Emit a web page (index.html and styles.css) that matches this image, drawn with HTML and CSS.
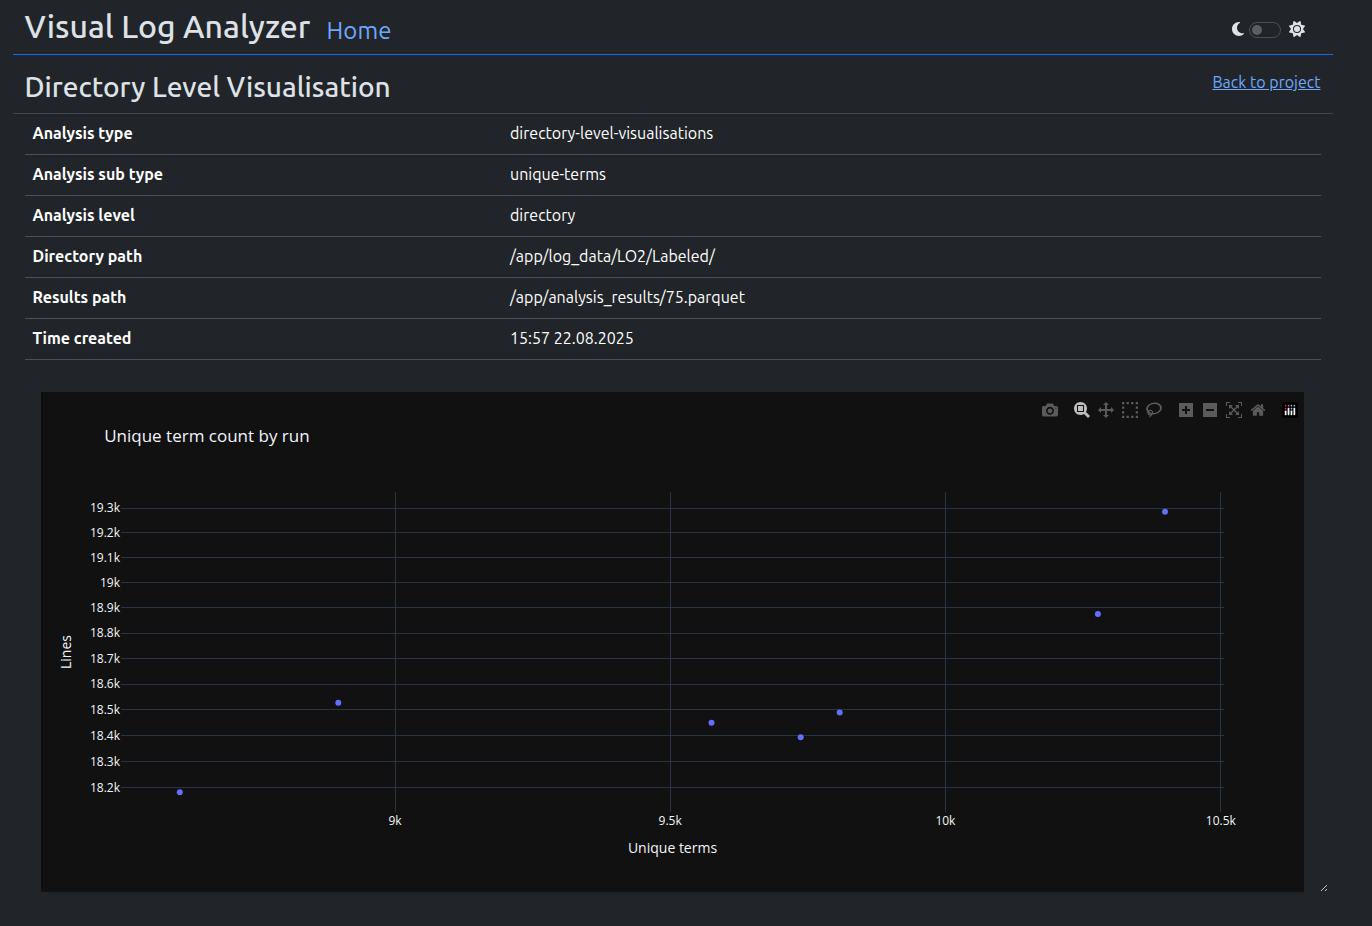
FILE: index.html
```html
<!DOCTYPE html>
<html lang="en">
<head>
<meta charset="utf-8">
<title>Visual Log Analyzer</title>
<link rel="stylesheet" href="styles.css">
</head>
<body>
<div class="container">
  <header class="topbar">
    <h1 class="brand">Visual Log Analyzer</h1>
    <a class="home-link">Home</a>
    <div class="theme">
      <svg class="moon" viewBox="0 0 384 512"><path d="M223.500 32C100 32 0 132.300 0 256S100 480 223.500 480c60.600 0 115.500-24.200 155.800-63.400c5-4.900 6.300-12.500 3.100-18.700s-10.100-9.700-17-8.500c-9.800 1.700-19.800 2.600-30.100 2.600c-96.900 0-175.500-78.800-175.500-176c0-65.800 36-123.100 89.300-153.300c6.100-3.500 9.200-10.500 7.700-17.300s-7.300-11.900-14.300-12.500c-6.300-.5-12.600-.8-19-.8z"/></svg>
      <span class="switch"><span class="knob"></span></span>
      <svg class="sun" viewBox="0 0 512 512"><path d="M361.500 1.200c5 2.100 8.600 6.600 9.600 11.900L391 121l107.900 19.800c5.300 1 9.800 4.600 11.900 9.600s1.500 10.700-1.600 15.200L446.900 256l62.300 90.300c3.100 4.500 3.700 10.200 1.600 15.200s-6.600 8.600-11.900 9.600L391 391 371.100 498.900c-1 5.300-4.600 9.800-9.600 11.900s-10.700 1.500-15.200-1.600L256 446.900l-90.300 62.300c-4.500 3.100-10.200 3.700-15.200 1.600s-8.600-6.600-9.600-11.900L121 391 13.100 371.100c-5.300-1-9.800-4.600-11.900-9.600s-1.500-10.700 1.600-15.200L65.100 256 2.800 165.700c-3.100-4.500-3.700-10.200-1.600-15.200s6.600-8.600 11.900-9.600L121 121 140.900 13.100c1-5.300 4.600-9.800 9.600-11.900s10.700-1.500 15.200 1.600L256 65.100 346.300 2.800c4.500-3.100 10.200-3.700 15.200-1.600zM160 256a96 96 0 1 1 192 0 96 96 0 1 1 -192 0zm224 0a128 128 0 1 0 -256 0 128 128 0 1 0 256 0z"/></svg>
    </div>
  </header>
  <div class="heading">
    <h2 class="title">Directory Level Visualisation</h2>
    <a class="back">Back to project</a>
  </div>
  <main class="content">
    <dl class="details">
      <div class="row"><dt>Analysis type</dt><dd>directory-level-visualisations</dd></div>
      <div class="row"><dt>Analysis sub type</dt><dd>unique-terms</dd></div>
      <div class="row"><dt>Analysis level</dt><dd>directory</dd></div>
      <div class="row"><dt>Directory path</dt><dd>/app/log_data/LO2/Labeled/</dd></div>
      <div class="row"><dt>Results path</dt><dd>/app/analysis_results/75.parquet</dd></div>
      <div class="row"><dt>Time created</dt><dd>15:57 22.08.2025</dd></div>
    </dl>
    <div class="chart-wrap">
      <div class="chart">
        <svg class="plot" viewBox="41 392 1263 500">
          <path class="grid" d="M395.5 492V812M670.5 492V812M945.5 492V812M1220.5 492V812M121 508.5H1224M121 532.5H1224M121 557.5H1224M121 582.5H1224M121 607.5H1224M121 633.5H1224M121 658.5H1224M121 684.5H1224M121 709.5H1224M121 735.5H1224M121 761.5H1224M121 787.5H1224"/>
          <g class="dots">
            <circle cx="179.8" cy="792.3" r="3"/><circle cx="338.3" cy="702.7" r="3"/><circle cx="711.5" cy="722.7" r="3"/><circle cx="800.7" cy="737.2" r="3"/><circle cx="839.7" cy="712.4" r="3"/><circle cx="1097.9" cy="614" r="3"/><circle cx="1165" cy="511.7" r="3"/>
          </g>
          <g class="ticks ticks-y">
            <text x="120" y="512">19.3k</text><text x="120" y="537">19.2k</text><text x="120" y="562">19.1k</text><text x="120" y="587">19k</text><text x="120" y="612">18.9k</text><text x="120" y="637">18.8k</text><text x="120" y="663">18.7k</text><text x="120" y="688">18.6k</text><text x="120" y="714">18.5k</text><text x="120" y="740">18.4k</text><text x="120" y="766">18.3k</text><text x="120" y="792">18.2k</text>
          </g>
          <g class="ticks ticks-x">
            <text x="395" y="825">9k</text><text x="670.2" y="825">9.5k</text><text x="945.4" y="825">10k</text><text x="1220.8" y="825">10.5k</text>
          </g>
          <text class="plot-title" x="104.2" y="442">Unique term count by run</text>
          <text class="axis" x="672.5" y="853">Unique terms</text>
          <text class="axis" transform="translate(71 652) rotate(-90)">Lines</text>
        </svg>
        <div class="modebar">
          <div class="group"><svg viewBox="0 0 1000 1000"><path transform="matrix(1 0 0 -1 0 850)" d="m500 450c-83 0-150-67-150-150 0-83 67-150 150-150 83 0 150 67 150 150 0 83-67 150-150 150z m400 150h-120c-16 0-34 13-39 29l-31 93c-6 15-23 28-40 28h-340c-16 0-34-13-39-28l-31-94c-6-15-23-28-40-28h-120c-55 0-100-45-100-100v-450c0-55 45-100 100-100h800c55 0 100 45 100 100v450c0 55-45 100-100 100z m-400-550c-138 0-250 112-250 250 0 138 112 250 250 250 138 0 250-112 250-250 0-138-112-250-250-250z m365 380c-19 0-35 16-35 35 0 19 16 35 35 35 19 0 35-16 35-35 0-19-16-35-35-35z"/></svg></div>
          <div class="group">
            <svg class="active" viewBox="0 0 1000 1000"><path transform="matrix(1 0 0 -1 0 850)" d="m1000-25l-250 251c40 63 63 138 63 218 0 224-182 406-407 406-224 0-406-182-406-406s183-406 407-406c80 0 155 22 218 62l250-250 125 125z m-812 250l0 438 437 0 0-438-437 0z m62 375l313 0 0-312-313 0 0 312z"/></svg>
            <svg viewBox="0 0 1000 1000"><path transform="matrix(1 0 0 -1 0 850)" d="m1000 350l-187 188 0-125-250 0 0 250 125 0-188 187-187-187 125 0 0-250-250 0 0 125-188-188 186-187 0 125 252 0 0-250-125 0 187-188 188 188-125 0 0 250 250 0 0-126 187 188z"/></svg>
            <svg viewBox="0 0 1000 1000"><path d="M0 0h143v143H0zM286 0h143v143H286zM571 0h143v143H571zM857 0h143v143H857zM0 286h143v143H0zM857 286h143v143H857zM0 571h143v143H0zM857 571h143v143H857zM0 857h143v143H0zM286 857h143v143H286zM571 857h143v143H571zM857 857h143v143H857z"/></svg>
            <svg viewBox="0 0 1031 1000"><path transform="matrix(1 0 0 -1 0 850)" d="m1018 538c-36 207-290 336-568 286-277-48-473-256-436-463 10-57 36-108 76-151-13-66 11-137 68-183 34-28 75-41 114-42l-55-70 0 0c-2-1-3-2-4-3-10-14-8-34 5-45 14-11 34-8 45 4 1 1 2 3 2 5l0 0 113 140c16 11 31 24 45 40 4 3 6 7 8 11 48-3 100 0 151 9 278 48 473 255 436 462z m-624-379c-80 14-149 48-197 96 42 42 109 47 156 9 33-26 47-66 41-105z m-187-74c-19 16-33 37-39 60 50-32 109-55 174-68-42-25-95-24-135 8z m360 75c-34-7-69-9-102-8 8 62-16 128-68 170-73 59-175 54-244-5-9 20-16 40-20 61-28 159 121 317 333 354s407-60 434-217c28-159-121-318-333-355z"/></svg>
          </div>
          <div class="group">
            <svg viewBox="0 0 875 1000"><path transform="matrix(1 0 0 -1 0 850)" d="m1 787l0-875 875 0 0 875-875 0z m687-500l-187 0 0-187-125 0 0 187-188 0 0 125 188 0 0 187 125 0 0-187 187 0 0-125z"/></svg>
            <svg viewBox="0 0 875 1000"><path transform="matrix(1 0 0 -1 0 850)" d="m0 788l0-876 876 0 0 876-876 0z m688-500l-500 0 0 125 500 0 0-125z"/></svg>
            <svg viewBox="0 0 1000 1000"><path transform="matrix(1 0 0 -1 0 850)" d="m250 850l-187 0-63 0 0-62 0-188 63 0 0 188 187 0 0 62z m688 0l-188 0 0-62 188 0 0-188 62 0 0 188 0 62-62 0z m-875-938l0 188-63 0 0-188 0-62 63 0 187 0 0 62-187 0z m875 188l0-188-188 0 0-62 188 0 62 0 0 62 0 188-62 0z m-125 188l-1 0-93-94-156 156 156 156 92-93 2 0 0 250-250 0 0-2 93-92-156-156-156 156 94 92 0 2-250 0 0-250 0 0 93 93 157-156-157-156-93 94 0 0 0-250 250 0 0 0-94 93 156 157 156-157-93-93 0 0 250 0 0 250z"/></svg>
            <svg viewBox="0 0 928.6 1000"><path transform="matrix(1 0 0 -1 0 850)" d="m786 296v-267q0-15-11-26t-25-10h-214v214h-143v-214h-214q-15 0-25 10t-11 26v267q0 1 0 2t0 2l321 264 321-264q1-1 1-4z m124 39l-34-41q-5-5-12-6h-2q-7 0-12 3l-386 322-386-322q-7-4-13-4-7 2-12 7l-35 41q-4 5-3 13t6 12l401 334q18 15 42 15t43-15l136-114v109q0 8 5 13t13 5h107q8 0 13-5t5-13v-227l122-102q5-5 6-12t-4-13z"/></svg>
          </div>
          <div class="group">
            <svg viewBox="0 0 132 132"><rect width="132" height="132" rx="18" fill="#000"/><g fill="#fff"><rect x="23" y="71" width="14" height="38" rx="6"/><rect x="47" y="47" width="14" height="62" rx="6"/><rect x="71" y="71" width="14" height="38" rx="6"/><rect x="95" y="47" width="14" height="62" rx="6"/></g><g fill="#ef1d64"><circle cx="30" cy="30" r="7"/><circle cx="30" cy="54" r="7"/></g><circle cx="54" cy="30" r="7" fill="#e763a5"/><g fill="#8fb6ea"><circle cx="78" cy="30" r="7"/><circle cx="78" cy="54" r="7"/><circle cx="102" cy="30" r="7"/></g></svg>
          </div>
        </div>
      </div>
      <svg class="grip" viewBox="0 0 8 8"><path d="M1 7L7 1M5 7L7 5"/></svg>
    </div>
  </main>
</div>
</body>
</html>
```

FILE: styles.css
```css
* { box-sizing: border-box; }
body { margin: 0; background: #212529; color: #dee2e6; font: 16px/24px Ubuntu, "Noto Sans", sans-serif; }
h1, h2, dl, dd { margin: 0; font-weight: 500; }
dd { font-weight: 400; }
.container { width: 1320px; margin-left: 12.5px; }
.topbar { display: flex; height: 55px; padding: 0 12px; border-bottom: 1px solid #0d6efd; }
.brand { width: 302px; font-size: 32px; line-height: 53px; white-space: nowrap; }
.home-link { font-size: 24px; line-height: 61px; color: #6ea8fe; letter-spacing: 0.1px; }
.theme { display: flex; align-items: center; margin: 6px 16px 0 auto; height: 46px; }
.theme svg { fill: #dee2e6; }
.moon { width: 12px; height: 16px; margin-right: 5px; }
.sun { width: 16px; height: 16px; margin-left: 7.5px; }
.switch { display: flex; align-items: center; width: 32px; height: 16px; margin-top: 2px; padding: 0 2px; border: 1px solid #495057; border-radius: 8px; }
.knob { width: 10px; height: 10px; border-radius: 50%; background: #5b5f63; }
.heading { display: flex; justify-content: space-between; height: 59px; padding: 0 12px; border-bottom: 1px solid #41464b; }
.title { font-size: 28px; line-height: 63px; white-space: nowrap; }
.back { color: #6ea8fe; text-decoration: underline; line-height: 54px; }
.content { padding: 0 12px; }
.row { display: flex; height: 41px; padding: 7px 8px 9px; border-bottom: 1px solid #4d5154; color: #fff; }
dt { width: 477.5px; font-weight: 600; }
.chart-wrap { display: flex; align-items: flex-end; margin: 32px -8px 0 16.5px; }
.chart { position: relative; width: 1263px; height: 500px; background: #111; }
.plot { display: block; width: 1263px; height: 500px; font-family: "Open Sans", sans-serif; fill: #f2f5fa; }
.grid { stroke: #283442; fill: none; }
.dots { fill: #636efa; }
.ticks { font-size: 12px; }
.ticks-y { text-anchor: end; }
.ticks-x, .axis { text-anchor: middle; }
.axis { font-size: 14px; }
.plot-title { font-size: 17px; }
.modebar { position: absolute; top: 10px; right: 2px; display: flex; }
.group { display: flex; padding-left: 8px; }
.group svg { width: 16px; height: 16px; margin: 0 4px; fill: #5b5b5b; }
.group .active { fill: #bdbdbd; }
.grip { width: 8px; height: 8px; margin-left: 16px; stroke: #c4c6c8; fill: none; }
```
